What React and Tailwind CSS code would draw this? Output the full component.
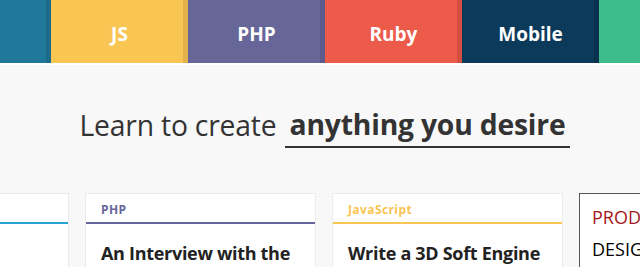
const TILES = [
  { label: 'JS', bg: 'bg-[#f9c553]', edge: 'border-[#e3b14a]' },
  { label: 'PHP', bg: 'bg-[#666699]', edge: 'border-[#5b5b8b]' },
  { label: 'Ruby', bg: 'bg-[#ec5a4a]', edge: 'border-[#d54f41]' },
  { label: 'Mobile', bg: 'bg-[#0c3a5b]', edge: 'border-[#093250]' },
];

const CARDS = [
  { tag: '', line: 'border-[#2aa2d6]', tagColor: 'text-[#2aa2d6]', title: '' },
  { tag: 'PHP', line: 'border-[#666699]', tagColor: 'text-[#666699]', title: 'An Interview with the' },
  { tag: 'JavaScript', line: 'border-[#f9c553]', tagColor: 'text-[#f9c553]', title: 'Write a 3D Soft Engine' },
];

function App() {
  return (
    <div className="bg-[#f8f8f8] h-screen overflow-hidden font-['Open_Sans',sans-serif]">
      <nav className="flex h-[65px] border-b-2 border-white">
        <div className="w-[51px] shrink-0 bg-[#20799b] border-r-[5px] border-[#1c6b89]" />
        {TILES.map((t) => (
          <a
            key={t.label}
            className={`w-[137px] shrink-0 flex items-center justify-center pt-[6px] text-white font-bold text-[19px] border-r-[5px] ${t.bg} ${t.edge}`}
          >
            <span className="pl-[5px]">{t.label}</span>
          </a>
        ))}
        <div className="flex-1 bg-[#3dbd8c]" />
      </nav>

      <h1 className="mt-[38px] pl-[10px] text-center text-[28.3px] leading-[44px] text-[#333] tracking-[-0.2px]">
        Learn to create{' '}
        <span className="ml-[1px] inline-block font-bold border-b-2 border-[#333] px-[5px] leading-[43px] align-top">
          anything you desire
        </span>
      </h1>

      <div className="flex gap-4 mt-[45px] ml-[-162px]">
        {CARDS.map((c, i) => (
          <div key={i} className="w-[231px] shrink-0 h-[120px] bg-white border border-[#ececec] overflow-hidden">
            <div className={`h-[30px] border-b-2 ${c.line} px-[15px] pt-[7px] text-[12px] font-bold tracking-[0.4px] ${c.tagColor}`}>
              {c.tag}
            </div>
            <div className="px-[15px] pt-[16px] text-[18px] font-bold text-[#222] leading-[26px] whitespace-nowrap tracking-[-0.3px]">
              {c.title}
            </div>
          </div>
        ))}
        <div className="w-[231px] shrink-0 h-[120px] bg-white border border-[#555] px-[12px] pt-[7px] text-[18px] leading-[32px]">
          <div className="text-[#a3161b]">PRODUCT</div>
          <div className="text-black">DESIGN</div>
        </div>
      </div>
    </div>
  );
}

export default App;
